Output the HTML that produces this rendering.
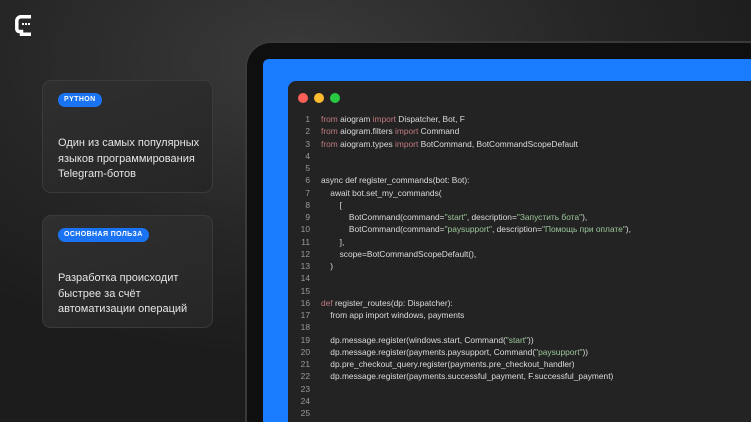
<!DOCTYPE html>
<html><head><meta charset="utf-8"><style>
*{margin:0;padding:0;box-sizing:border-box}
html,body{width:751px;height:422px;overflow:hidden}
body{position:relative;font-family:"Liberation Sans",sans-serif;
background:radial-gradient(ellipse 500px 300px at 300px 60px,#3a3a3a,#262626 60%,#1c1c1c);}
.card{position:absolute;left:42px;width:171px;border-radius:9px;background:linear-gradient(160deg,#2f2f2f,#262626);border:1px solid #3a3a3a;}
.badge{position:absolute;left:15px;height:14px;border-radius:7px;background:#1a73f2;color:#fff;font-size:7px;font-weight:bold;line-height:14px;padding:0 6px;letter-spacing:.4px}
.txt{position:absolute;left:15px;color:#e6e6e6;font-size:11px;line-height:15.5px}
.bezel{position:absolute;left:245px;top:41px;width:506px;height:381px;border-radius:26px 0 0 0;background:#0f0f0f;border:2px solid #3a3a3a;border-right:none;border-bottom:none}
.screen{position:absolute;left:263px;top:59px;width:488px;height:363px;border-radius:6px 0 0 0;background:#1a7cff}
.win{position:absolute;left:288px;top:81px;width:463px;height:341px;border-radius:8px 0 0 0;background:#232323}
.dot{position:absolute;top:93px;width:10px;height:10px;border-radius:50%}
.code{position:absolute;left:0;top:113px;width:751px;height:309px;overflow:hidden;font-size:8.4px;color:#dcdcdc;line-height:12.25px;white-space:pre}
.ln{position:absolute;left:298px;width:12px;text-align:right;color:#9a9a9a}
.cl{position:absolute;left:321px}
.k{color:#c07a80}.s{color:#9cc79a}
</style></head><body>
<svg style="position:absolute;left:15px;top:15px" width="17" height="21" viewBox="0 0 17 21">
<path d="M16 1.8H6A4.2 4.2 0 0 0 1.8 6V14A2.5 2.5 0 0 0 4 16.5H6.5V19.2H16" fill="none" stroke="#fff" stroke-width="3.5"/>
<rect x="7" y="8" width="2" height="2" fill="#fff"/><rect x="10" y="8" width="2" height="2" fill="#fff"/><rect x="13" y="8" width="2" height="2" fill="#fff"/>
</svg>
<div class="card" style="top:80px;height:113px"><div class="badge" style="top:12px">PYTHON</div>
<div class="txt" style="top:55px">Один из самых популярных<br>языков программирования<br>Telegram-ботов</div></div>
<div class="card" style="top:215px;height:113px"><div class="badge" style="top:12px">ОСНОВНАЯ ПОЛЬЗА</div>
<div class="txt" style="top:55px">Разработка происходит<br>быстрее за счёт<br>автоматизации операций</div></div>
<div class="bezel"></div><div class="screen"></div><div class="win"></div>
<div class="dot" style="left:298px;background:#fe5f57"></div>
<div class="dot" style="left:314px;background:#febc2e"></div>
<div class="dot" style="left:330px;background:#28c840"></div>
<div class="code">
<div class="ln" style="top:0">1<br>2<br>3<br>4<br>5<br>6<br>7<br>8<br>9<br>10<br>11<br>12<br>13<br>14<br>15<br>16<br>17<br>18<br>19<br>20<br>21<br>22<br>23<br>24<br>25</div>
<div class="cl" style="top:0"><span class="k">from</span> aiogram <span class="k">import</span> Dispatcher, Bot, F
<span class="k">from</span> aiogram.filters <span class="k">import</span> Command
<span class="k">from</span> aiogram.types <span class="k">import</span> BotCommand, BotCommandScopeDefault


async def register_commands(bot: Bot):
    await bot.set_my_commands(
        [
            BotCommand(command=<span class="s">"start"</span>, description=<span class="s">"Запустить бота"</span>),
            BotCommand(command=<span class="s">"paysupport"</span>, description=<span class="s">"Помощь при оплате"</span>),
        ],
        scope=BotCommandScopeDefault(),
    )


<span class="k">def</span> register_routes(dp: Dispatcher):
    from app import windows, payments

    dp.message.register(windows.start, Command(<span class="s">"start"</span>))
    dp.message.register(payments.paysupport, Command(<span class="s">"paysupport"</span>))
    dp.pre_checkout_query.register(payments.pre_checkout_handler)
    dp.message.register(payments.successful_payment, F.successful_payment)</div>
</div>
</body></html>
